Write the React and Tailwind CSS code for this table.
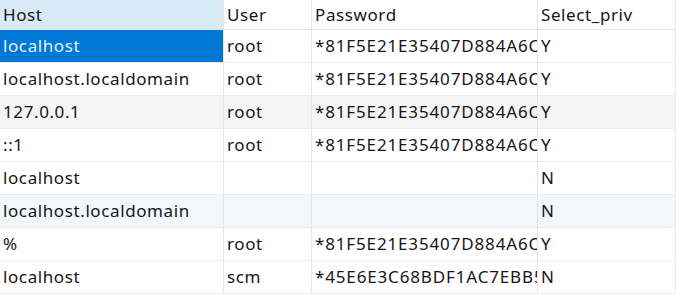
import React from 'react';

const rows = [
  { host: 'localhost', user: 'root', password: '*81F5E21E35407D884A6CD4A731AEBFB6AF209E1B', priv: 'Y' },
  { host: 'localhost.localdomain', user: 'root', password: '*81F5E21E35407D884A6CD4A731AEBFB6AF209E1B', priv: 'Y' },
  { host: '127.0.0.1', user: 'root', password: '*81F5E21E35407D884A6CD4A731AEBFB6AF209E1B', priv: 'Y' },
  { host: '::1', user: 'root', password: '*81F5E21E35407D884A6CD4A731AEBFB6AF209E1B', priv: 'Y' },
  { host: 'localhost', user: '', password: '', priv: 'N' },
  { host: 'localhost.localdomain', user: '', password: '', priv: 'N' },
  { host: '%', user: 'root', password: '*81F5E21E35407D884A6CD4A731AEBFB6AF209E1B', priv: 'Y' },
  { host: 'localhost', user: 'scm', password: '*45E6E3C68BDF1AC7EBB5A2C1D4E9F0B7763A1C2D', priv: 'N' },
];

const cols = 'grid grid-cols-[224px_88px_226px_138px]';
const cell = 'pl-[3px] overflow-hidden whitespace-nowrap border-r border-[#e6e6e6] flex items-center';

const rowBg = (i) => {
  if (i === 2) return 'bg-[#f5f5f5]';
  if (i === 5) return 'bg-[#f2f7fc]';
  return 'bg-white';
};

const App = () => {
  return (
    <div
      className="w-[676px] h-[295px] bg-white text-[17px] tracking-[0.6px] text-[#161616] overflow-hidden"
      style={{ fontFamily: '"Noto Sans", "Open Sans", sans-serif' }}
    >
      {/* Header */}
      <div className={`${cols} h-[30px] border-b border-[#e3e3e3]`}>
        <div className={`${cell} bg-[#d9eaf7]`}>Host</div>
        <div className={cell}>User</div>
        <div className={cell}>Password</div>
        <div className={cell}>Select_priv</div>
      </div>

      {rows.map((r, i) => (
        <div key={i} className={`${cols} h-[33px] border-b border-[#ececec] ${rowBg(i)}`}>
          <div className={`${cell} ${i === 0 ? 'bg-[#0078d7] text-[#e6f2ff]' : ''}`}>{r.host}</div>
          <div className={cell}>{r.user}</div>
          <div className={`${cell} tracking-[0.85px]`}>{r.password}</div>
          <div className={cell}>{r.priv}</div>
        </div>
      ))}
    </div>
  );
};

export default App;
